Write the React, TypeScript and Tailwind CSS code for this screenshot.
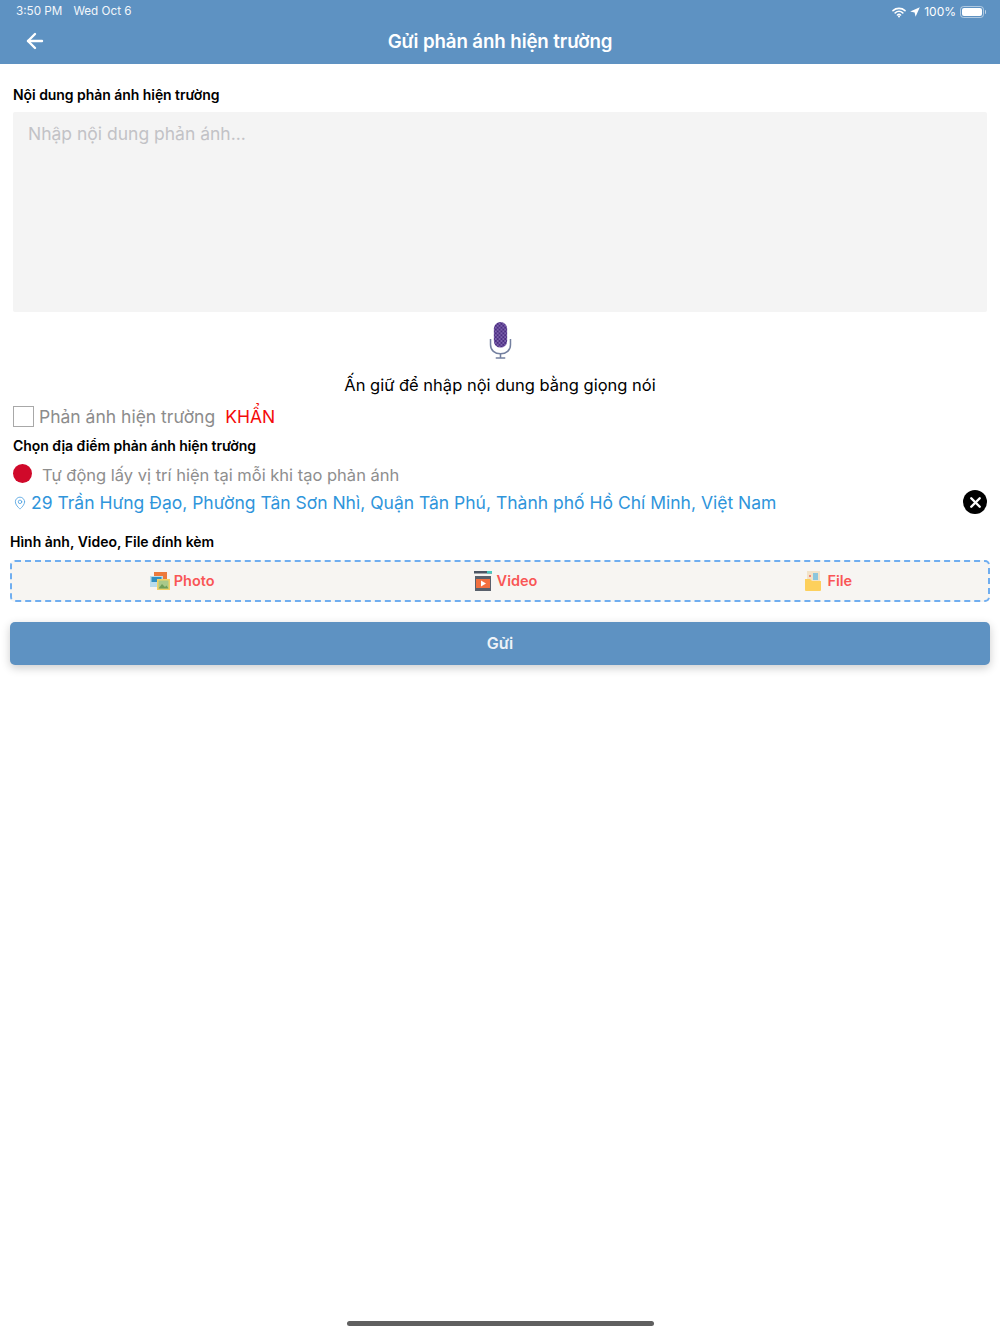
import { ArrowLeft, MapPin, X } from "lucide-react";

const font = { fontFamily: "Inter, 'Noto Sans', sans-serif" };

function Wifi() {
  return (
    <svg width="14" height="11" viewBox="0 0 14 11" fill="none" stroke="white" strokeLinecap="round">
      <path d="M1 3.6C4.4.6 9.6.6 13 3.6" strokeWidth="1.6" />
      <path d="M3.2 5.9C5.4 4 8.6 4 10.8 5.9" strokeWidth="1.6" />
      <path d="M5.4 8C6.3 7.3 7.7 7.3 8.6 8" strokeWidth="1.5" />
      <circle cx="7" cy="9.6" r="1" fill="white" stroke="none" />
    </svg>
  );
}

function Location() {
  return (
    <svg width="10" height="10" viewBox="0 0 10 10">
      <path d="M9.8.2 5.6 9.8 4.6 5.4.2 4.4Z" fill="white" />
    </svg>
  );
}

function Battery() {
  return (
    <div className="flex items-center">
      <div className="w-[24px] h-[12px] rounded-[3.5px] border border-white/50 p-[1px]">
        <div className="w-full h-full rounded-[2px] bg-white" />
      </div>
      <div className="w-[1px] h-[4px] ml-[1px] bg-white/60 rounded-r" />
    </div>
  );
}

function Mic() {
  return (
    <svg width="23" height="38" viewBox="0 0 24 40" fill="none">
      <defs>
        <pattern id="dots" width="4" height="4" patternUnits="userSpaceOnUse">
          <rect width="4" height="4" fill="#4a2d80" />
          <rect width="2" height="2" fill="#7d62ad" />
          <rect x="2" y="2" width="2" height="2" fill="#7d62ad" />
        </pattern>
      </defs>
      <rect x="5" y="1" width="14" height="27" rx="7" fill="url(#dots)" />
      <path d="M1.5 19v6c0 6 4.500 9.500 10.500 9.500s10.500-3.500 10.500-9.500v-6" stroke="#7480a0" strokeWidth="1.6" />
      <path d="M12 34v5M7 39h10" stroke="#7480a0" strokeWidth="1.6" />
    </svg>
  );
}

function PhotoIcon() {
  return (
    <svg width="20" height="18" viewBox="0 0 20 18">
      <rect x="4" y="0" width="13" height="11" fill="#ec7a3c" />
      <rect x="0" y="4" width="13" height="11" fill="#b9dcec" />
      <rect x="1.500" y="5" width="10" height="5" fill="#2f8fc0" />
      <rect x="7" y="7" width="13" height="11" fill="#f2d266" />
      <rect x="8.500" y="8.500" width="10" height="8" fill="#a9c98a" />
      <path d="M8.500 16.500 12 12l3 3 1.500-1.500 2 3Z" fill="#6f9e58" />
    </svg>
  );
}

function VideoIcon() {
  return (
    <svg width="18" height="20" viewBox="0 0 18 20">
      <rect x="0" y="0" width="18" height="2.500" fill="#4b5563" />
      <rect x="13" y="0" width="5" height="2.500" fill="#45c8c0" />
      <rect x="1" y="5" width="16" height="15" fill="#59606b" />
      <rect x="2" y="8" width="14" height="9" fill="#f2703f" />
      <path d="M7 9.500 12 12.500 7 15.500Z" fill="white" />
    </svg>
  );
}

function FileIcon() {
  return (
    <svg width="16" height="20" viewBox="0 0 16 20">
      <rect x="2" y="0" width="13" height="12" fill="#f3e3c8" />
      <rect x="8" y="2" width="5" height="7" fill="#8cc6dc" />
      <rect x="4" y="4" width="2" height="2" fill="#ee8a7a" />
      <path d="M0 8h5l2 2h9v9a1 1 0 0 1-1 1H1a1 1 0 0 1-1-1Z" fill="#fdd05c" />
    </svg>
  );
}

const attachments = [
  { label: "Photo", icon: <PhotoIcon />, cell: "gap-[4px]" },
  { label: "Video", icon: <VideoIcon />, cell: "gap-[5px] pl-[2px]" },
  { label: "File", icon: <FileIcon />, cell: "gap-[6px] pl-[4px]" },
];

export default function App() {
  return (
    <div className="w-[1000px] min-h-[1334px] flex flex-col bg-white" style={font}>
      {/* header */}
      <div className="h-[64px] bg-[#5e92c2] text-white shrink-0 px-4">
        <div className="h-[24px] -mr-[2px] flex items-center justify-between text-[11.7px]">
          <div className="flex gap-[11px] text-[#f2f6fa]">
            <span>3:50 PM</span>
            <span>Wed Oct 6</span>
          </div>
          <div className="flex items-center gap-[4px]">
            <Wifi />
            <Location />
            <span className="text-[12px]">100%</span>
            <Battery />
          </div>
        </div>
        <div className="relative h-[36px] flex items-center justify-center">
          <ArrowLeft className="absolute left-[7px] top-[5px] text-white" size={24} strokeWidth={2.4} />
          <span className="text-[18.7px] font-semibold tracking-[-0.1px]">Gửi phản ánh hiện trường</span>
        </div>
      </div>

      <div className="px-[13px] pt-[22px]">
        <div className="text-[14px] leading-[18px] font-semibold text-black tracking-[-0.05px]">Nội dung phản ánh hiện trường</div>
        <div className="mt-[8px] h-[200px] bg-[#f4f4f4] px-[15px] py-[9px] text-[17.5px] leading-[26px] text-[#c2c2c6] rounded-[2px]">
          Nhập nội dung phản ánh...
        </div>
        <div className="flex justify-center mt-[9px]">
          <Mic />
        </div>
        <div className="text-center text-[16.5px] leading-[24px] mt-[14px] text-black">
          Ấn giữ để nhập nội dung bằng giọng nói
        </div>

        <div className="flex items-center mt-[7px] h-[24px]">
          <div className="w-[21px] h-[21px] border border-[#a8a8a8] bg-white" />
          <span className="ml-[5px] pt-[2px] text-[17.5px] text-[#8c8c8c]">Phản ánh hiện trường</span>
          <span className="ml-[10px] pt-[2px] text-[17.5px] text-[#f40b0b]">KHẨN</span>
        </div>
        <div className="mt-[9px] text-[14px] leading-[18px] font-semibold text-black tracking-[-0.05px]">Chọn địa điểm phản ánh hiện trường</div>
        <div className="flex items-center mt-[8px] h-[24px]">
          <div className="w-[19px] h-[19px] rounded-full bg-[#d0092a] -mt-[3px]" />
          <span className="ml-[10px] text-[16.5px] text-[#8e8e8e]">Tự động lấy vị trí hiện tại mỗi khi tạo phản ánh</span>
        </div>
        <div className="flex items-center mt-[2px] h-[28px]">
          <MapPin className="text-[#4da0e0]" size={14} strokeWidth={1.4} />
          <span className="ml-[4px] text-[17.5px] text-[#2f95db]">
            29 Trần Hưng Đạo, Phường Tân Sơn Nhì, Quận Tân Phú, Thành phố Hồ Chí Minh, Việt Nam
          </span>
          <div className="ml-auto w-[24px] h-[24px] -mt-[2px] rounded-full bg-black flex items-center justify-center">
            <X className="text-white" size={17} strokeWidth={3.4} />
          </div>
        </div>
      </div>

      <div className="px-[10px] mt-[16px]">
        <div className="text-[14px] leading-[18px] font-semibold text-black">Hình ảnh, Video, File đính kèm</div>
        <div className="mt-[9px] h-[42px] rounded-[5px] border-2 border-dashed border-[#70aef0] bg-[#f7f5f2] grid grid-cols-3 pl-[9px]">
          {attachments.map((a) => (
            <div key={a.label} className={`flex items-center justify-center ${a.cell}`}>
              {a.icon}
              <span className="text-[14.5px] font-semibold text-[#f95656]">{a.label}</span>
            </div>
          ))}
        </div>
        <div className="mt-[20px] h-[43px] pb-[2px] rounded-[5px] bg-[#5e92c2] text-[#edf2f7] text-[16px] font-semibold flex items-center justify-center shadow-[0_3px_10px_rgba(0,0,0,0.2)]">
          Gửi
        </div>
      </div>

      <div className="mt-auto mb-[8px] mx-auto w-[307px] h-[5px] rounded-full bg-[#606060]" />
    </div>
  );
}
